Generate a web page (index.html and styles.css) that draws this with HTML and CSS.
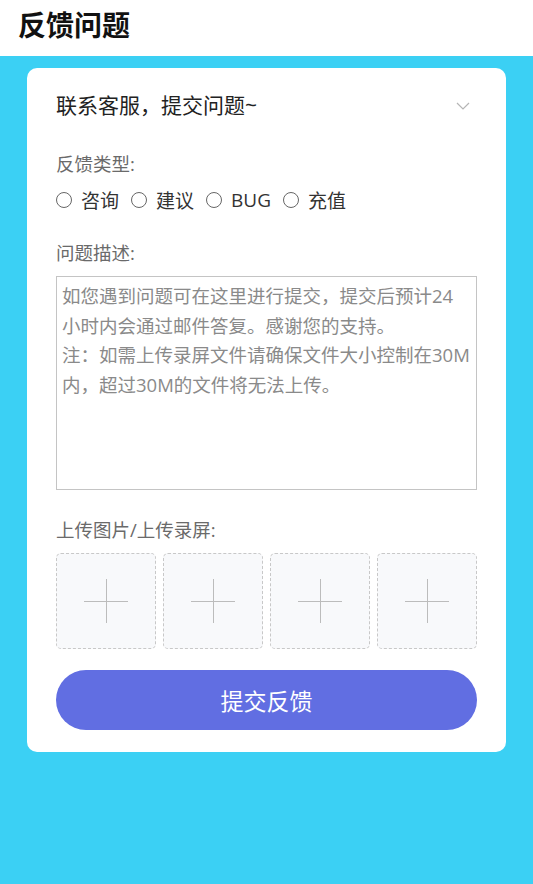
FILE: index.html
```html
<!DOCTYPE html>
<html lang="zh">
<head>
<meta charset="utf-8">
<link rel="stylesheet" href="styles.css">
</head>
<body>
<header class="header"><h1 class="title">反馈问题</h1></header>
<main class="page">
  <section class="card">
    <div class="select-row">
      <span class="select-text">联系客服，提交问题~</span>
      <svg class="chevron" width="14" height="8" viewBox="0 0 14 8"><path d="M1 1 L7 7 L13 1" fill="none" stroke="#b5b5b5" stroke-width="1.2"/></svg>
    </div>
    <div class="label label-type">反馈类型:</div>
    <div class="radios">
      <label class="radio"><span class="dot"></span>咨询</label>
      <label class="radio"><span class="dot"></span>建议</label>
      <label class="radio"><span class="dot"></span>BUG</label>
      <label class="radio"><span class="dot"></span>充值</label>
    </div>
    <div class="label label-desc">问题描述:</div>
    <textarea class="desc" placeholder="如您遇到问题可在这里进行提交，提交后预计24小时内会通过邮件答复。感谢您的支持。&#10;注：如需上传录屏文件请确保文件大小控制在30M内，超过30M的文件将无法上传。"></textarea>
    <div class="label label-upload">上传图片/上传录屏:</div>
    <div class="uploads">
      <div class="upload"><span class="plus"></span></div>
      <div class="upload"><span class="plus"></span></div>
      <div class="upload"><span class="plus"></span></div>
      <div class="upload"><span class="plus"></span></div>
    </div>
    <button class="submit">提交反馈</button>
  </section>
</main>
</body>
</html>
```
FILE: styles.css
```css
* { box-sizing: border-box; }
html, body { margin: 0; padding: 0; }
body {
  font-family: "Open Sans", "Noto Sans CJK SC", sans-serif;
  background: #3bd0f4;
  min-height: 884px;
}
.header {
  background: #fff;
  height: 56px;
  display: flex;
  align-items: center;
  padding-left: 18px;
}
.title {
  margin: 0;
  font-size: 28px;
  font-weight: 700;
  color: #111;
  line-height: 1;
  margin-top: -6px;
}
.page { padding: 12px 27px 0; }
.card {
  background: #fff;
  border-radius: 10px;
  padding: 0 29px 22px;
}
.select-row {
  height: 72px;
  display: flex;
  align-items: center;
  justify-content: space-between;
}
.select-text { font-size: 21px; color: #222; }
.chevron { margin-right: 7px; margin-top: 4px; }
.label {
  font-size: 18.5px;
  color: #6a6a6a;
  line-height: 24px;
}
.label-type { margin-top: 12px; }
.radios {
  margin-top: 10px;
  height: 28px;
  display: flex;
  align-items: center;
  gap: 12px;
}
.radio {
  display: flex;
  align-items: center;
  font-size: 19px;
  color: #333;
}
.dot {
  width: 16px;
  height: 16px;
  border: 1.5px solid #666;
  border-radius: 50%;
  margin-right: 9px;
}
.label-desc { margin-top: 27px; }
.desc {
  display: block;
  margin-top: 11px;
  width: 100%;
  height: 214px;
  border: 1px solid #c4c4c4;
  padding: 4px 5.5px 4px 5px;
  font-family: inherit;
  font-size: 18.5px;
  line-height: 29.5px;
  resize: none;
  outline: none;
}
.desc::placeholder { color: #8a8a8a; }
.label-upload { margin-top: 28px; }
.uploads {
  margin-top: 11px;
  display: flex;
  gap: 7px;
}
.upload {
  width: 100px;
  height: 96px;
  border: 1px dashed #c8c8c8;
  border-radius: 5px;
  background: #f8f9fb;
  position: relative;
}
.plus {
  position: absolute;
  left: 50%;
  top: 50%;
  width: 44px;
  height: 44px;
  transform: translate(-50%, -50%);
}
.plus::before, .plus::after {
  content: "";
  position: absolute;
  background: #bcbcbc;
}
.plus::before { left: 0; right: 0; top: 21.5px; height: 1px; }
.plus::after { top: 0; bottom: 0; left: 21.5px; width: 1px; }
.submit {
  display: block;
  margin-top: 21px;
  width: 100%;
  height: 60px;
  border: none;
  border-radius: 30px;
  background: #616ee2;
  color: #fff;
  font-family: inherit;
  font-size: 23px;
}
```
